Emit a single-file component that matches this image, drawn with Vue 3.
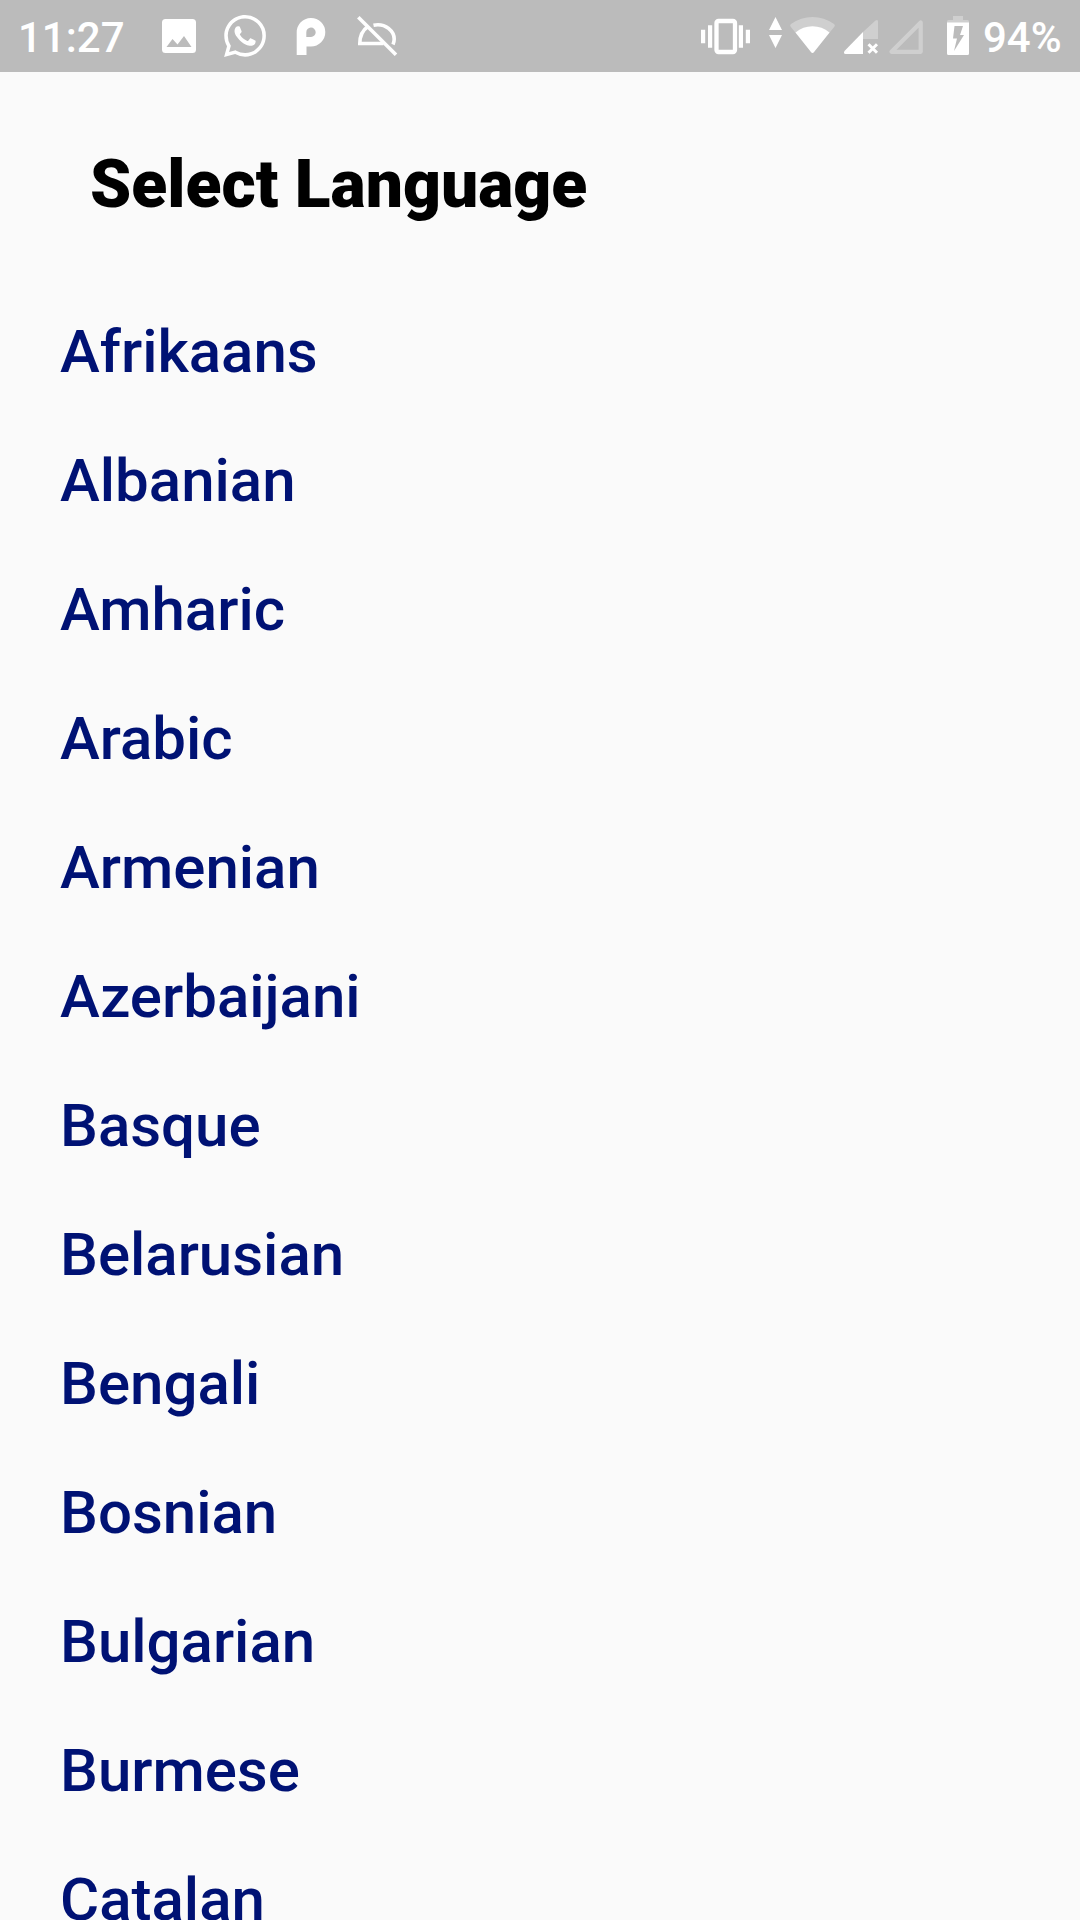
<script setup>
const languages = [
  'Afrikaans', 'Albanian', 'Amharic', 'Arabic', 'Armenian', 'Azerbaijani', 'Basque',
  'Belarusian', 'Bengali', 'Bosnian', 'Bulgarian', 'Burmese', 'Catalan',
]
</script>

<template>
  <main class="screen">
    <header class="status">
      <span class="clock">11:27</span>
      <svg class="notifications" width="260" height="72" viewBox="150 0 260 72" fill="#fff">
        <path fill-rule="evenodd" d="M165.500 19H192.500Q196 19 196 22.500V49.500Q196 53 192.500 53H165.500Q162 53 162 49.500V22.500Q162 19 165.500 19ZM166.500 47H191.500L184 36L177.500 44.500L172.500 39Z" />
        <g transform="translate(224 15) scale(1.75)">
          <path d="M17.472 14.382c-.297-.149-1.758-.867-2.03-.967-.273-.099-.471-.148-.67.15-.197.297-.767.966-.94 1.164-.173.199-.347.223-.644.075-.297-.15-1.255-.463-2.39-1.475-.883-.788-1.48-1.761-1.653-2.059-.173-.297-.018-.458.13-.606.134-.133.298-.347.446-.52.149-.174.198-.298.298-.497.099-.198.05-.371-.025-.52-.075-.149-.669-1.612-.916-2.207-.242-.579-.487-.5-.669-.51-.173-.008-.371-.01-.57-.01-.198 0-.52.074-.792.372-.272.297-1.04 1.016-1.04 2.479 0 1.462 1.065 2.875 1.213 3.074.149.198 2.096 3.2 5.077 4.487.709.306 1.262.489 1.694.625.712.227 1.36.195 1.871.118.571-.085 1.758-.719 2.006-1.413.248-.694.248-1.289.173-1.413-.074-.124-.272-.198-.57-.347m-5.421 7.403h-.004a9.870 9.870 0 01-5.031-1.378l-.361-.214-3.741.982.998-3.648-.235-.374a9.860 9.860 0 01-1.510-5.260c.001-5.450 4.436-9.884 9.888-9.884 2.640 0 5.122 1.030 6.988 2.898a9.825 9.825 0 012.893 6.994c-.003 5.450-4.437 9.884-9.885 9.884m8.413-18.297A11.815 11.815 0 0012.050 0C5.495 0 .160 5.335.157 11.892c0 2.096.547 4.142 1.588 5.945L.057 24l6.305-1.654a11.882 11.882 0 005.683 1.448h.005c6.554 0 11.890-5.335 11.893-11.893a11.821 11.821 0 00-3.480-8.413z" />
        </g>
        <path fill-rule="evenodd" d="M296.700 55V32.500A14.300 14.300 0 1 1 311 46.500H306.500V55ZM306.300 37V32.500A4.700 4.700 0 1 1 311 37Z" />
        <g fill="none" stroke="#fff" stroke-width="3.600">
          <path d="M358.300 17.300L396 54.700" />
          <path d="M368 26.500Q359.800 32 359.800 43.500H383.500" />
          <path d="M373.500 25.200C386 22.500 394.200 32 394.200 39Q394.200 42 393 44.500" />
        </g>
      </svg>
      <svg class="system" width="280" height="72" viewBox="695 0 280 72" fill="#fff">
        <rect x="716.500" y="21" width="18.500" height="31" rx="2" fill="none" stroke="#fff" stroke-width="4.300" />
        <path d="M701 29.800h4.200v13.400H701zM708 25.300h4.200v22.400H708zM738.800 25.300h4.200v22.400h-4.200zM745.800 29.800h4.200v13.400h-4.200z" />
        <path d="M775.500 17L782 30H769ZM769 35H782L775.500 48Z" />
        <path opacity=".3" d="M790.500 26.500Q789.500 25 791 24Q801 17 812.500 17T834 24Q835.500 25 834.500 26.500L814 52Q812.500 54 811 52Z" />
        <path d="M795.500 32.500Q803 26.300 812.500 26.300T829.500 32.500L814 52Q812.500 54 811 52Z" />
        <path opacity=".3" d="M863 32L875.500 20.500Q878 19 878 21.500V39H863Z" />
        <path d="M863 32V54H845.500Q843 53.500 844.500 51Z" />
        <path d="M868.500 44.300L877 52.700M877 44.300L868.500 52.700" stroke="#fff" stroke-width="3" />
        <path d="M891.500 51.800L920.700 22.500V51.800Z" fill="none" stroke="#fff" stroke-opacity=".3" stroke-width="4.200" stroke-linejoin="round" />
        <path opacity=".3" d="M953 16h10v4h4.500q1.500 0 1.500 1.500V23h-22v-1.500q0-1.500 1.500-1.500h4.500z" />
        <path fill-rule="evenodd" d="M947 22.500H969V53.500Q969 55 967.500 55H948.500Q947 55 947 53.500ZM954.500 26L953 38.500H957L954 51L964 35H960L963 26Z" />
      </svg>
      <span class="battery">94%</span>
    </header>
    <h1 class="title">Select Language</h1>
    <ul class="list">
      <li v-for="name in languages" :key="name" class="row">{{ name }}</li>
    </ul>
  </main>
</template>

<style>
body {
  margin: 0;
  background: #fafafa;
}
</style>

<style scoped>
.screen {
  width: 1080px;
  height: 1920px;
  overflow: hidden;
  background: #fafafa;
  font-family: Roboto, sans-serif;
}
.status {
  display: flex;
  height: 72px;
  background: #bbb;
  color: #fff;
  font-size: 42px;
  font-weight: 500;
  line-height: 75px;
  white-space: nowrap;
}
.clock {
  width: 132px;
  padding-left: 18px;
}
.notifications,
.system {
  flex: none;
}
.system {
  margin-left: 285px;
}
.battery {
  margin-left: 8px;
}
.title {
  margin: 0;
  padding: 73px 0 0 90px;
  color: #000;
  font-size: 66px;
  font-weight: 900;
  line-height: 80px;
}
.list {
  margin: 0;
  padding: 62px 0 0 60px;
  list-style: none;
}
.row {
  height: 129px;
  color: #001274;
  font-size: 60px;
  font-weight: 500;
  line-height: 129px;
  white-space: nowrap;
}
</style>
